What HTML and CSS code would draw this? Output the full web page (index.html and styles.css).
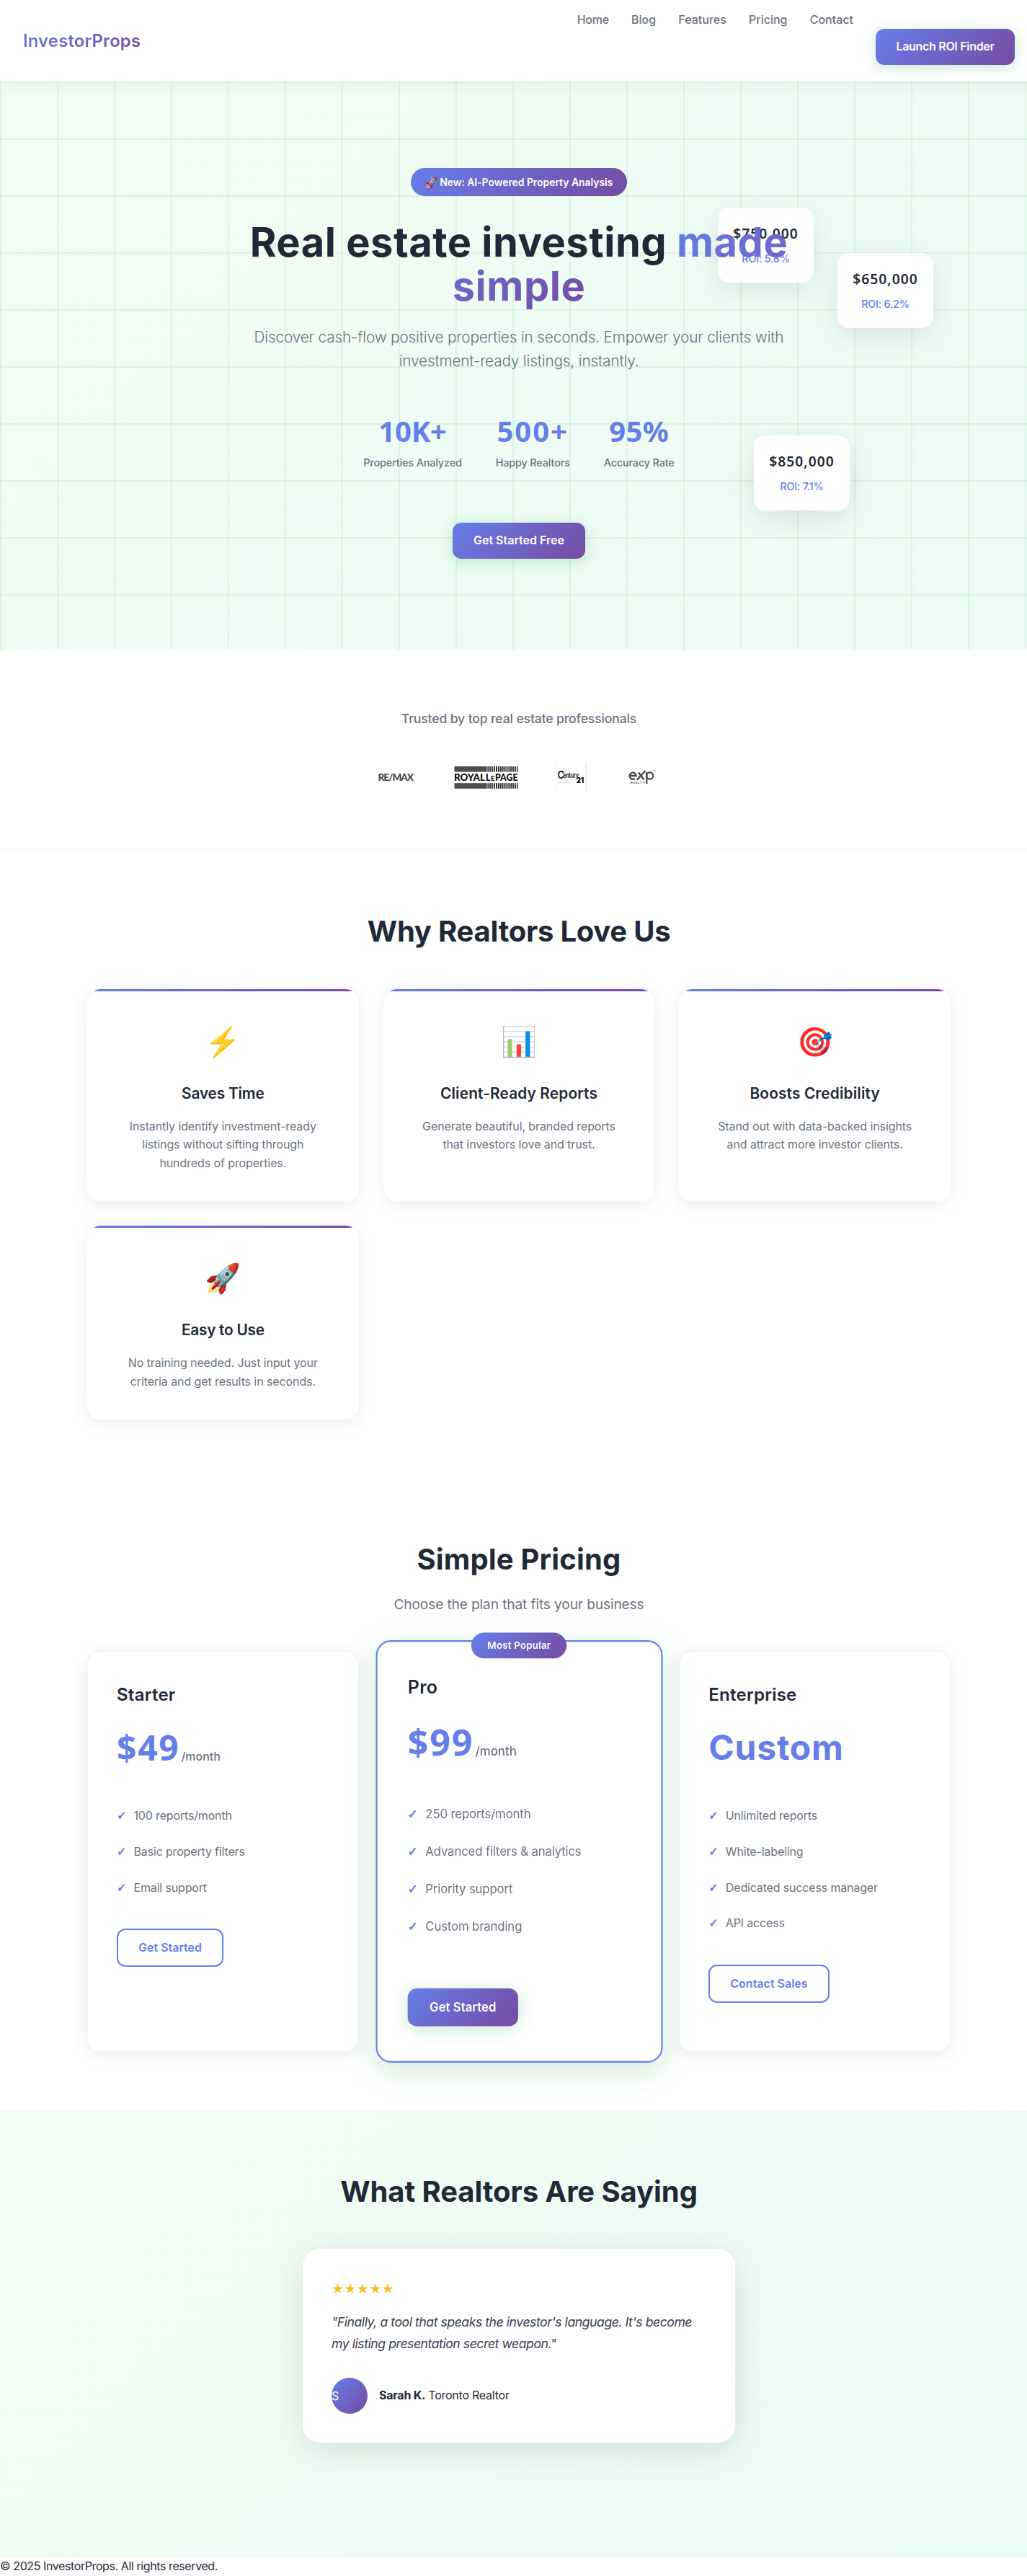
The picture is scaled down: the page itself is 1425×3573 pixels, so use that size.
FILE: index.html
```html
<!DOCTYPE html>
<html lang="en">
<head>
<meta charset="utf-8">
<title>InvestorProps</title>
<link rel="stylesheet" href="styles.css">
</head>
<body>
<div class="page">
  <nav class="nav">
    <div class="logo">InvestorProps</div>
    <div class="nav-links">
      <a class="l-home">Home</a><a>Blog</a><a>Features</a><a>Pricing</a><a>Contact</a>
    </div>
    <a class="btn btn-primary nav-cta">Launch ROI Finder</a>
  </nav>

  <header class="hero">
    <div class="float-card fc-1"><div class="price">$750,000</div><div class="roi">ROI: 5.8%</div></div>
    <div class="float-card fc-2"><div class="price">$650,000</div><div class="roi">ROI: 6.2%</div></div>
    <div class="float-card fc-3"><div class="price">$850,000</div><div class="roi">ROI: 7.1%</div></div>
    <div class="hero-content">
      <div class="badge">🚀 New: AI-Powered Property Analysis</div>
      <h1>Real estate investing <span class="grad">made<br>simple</span></h1>
      <p>Discover cash-flow positive properties in seconds. Empower your clients with<br>investment-ready listings, instantly.</p>
      <div class="stats">
        <div><div class="num n1">10K+</div><div class="lbl">Properties Analyzed</div></div>
        <div><div class="num n2">500+</div><div class="lbl">Happy Realtors</div></div>
        <div><div class="num n3">95%</div><div class="lbl">Accuracy Rate</div></div>
      </div>
      <a class="btn btn-primary hero-cta">Get Started Free</a>
    </div>
  </header>

  <section class="trusted">
    <p>Trusted by top real estate professionals</p>
    <div class="logos">
      <svg width="51" height="40" viewBox="0 0 51 40"><text x="0.5" y="25" font-family="Lato" font-weight="900" font-size="13.6" textLength="49.5" fill="#444">RE/MAX</text></svg>
      <svg width="89" height="40" viewBox="0 0 89 40">
        <defs><pattern id="bars" width="2.9" height="8" patternUnits="userSpaceOnUse"><rect width="1.8" height="8" fill="#222"/></pattern></defs>
        <g fill="#4d4d4d"><rect x="0.5" y="5" width="43.5" height="7.6"/><rect x="0.5" y="28.2" width="43.5" height="7.6"/></g>
        <g fill="url(#bars)"><rect x="44" y="5" width="44.5" height="7.6"/><rect x="44" y="28.2" width="44.5" height="7.6"/></g>
        <text y="25" font-family="Lato" font-weight="900" font-size="12.4" fill="#0a0a0a"><tspan x="0" textLength="43" lengthAdjust="spacingAndGlyphs">ROYAL</tspan><tspan x="44" textLength="7">L</tspan><tspan x="51" font-size="9.5">E</tspan><tspan x="57" textLength="31.5" lengthAdjust="spacingAndGlyphs">PAGE</tspan></text>
      </svg>
      <svg class="c21" width="44" height="40" viewBox="0 0 44 40">
        <path d="M.5 0v40" stroke="#f1f1f1"/><path d="M42.5 0v40" stroke="#f1f1f1" stroke-width="3"/>
        <path d="M3 27.8h18" stroke="#ddd"/><path d="M13 25q9-3 17 1" stroke="#e4e4e4" fill="none"/>
        <text x="2.4" y="22" font-family="Inter" font-weight="600" font-size="14" fill="#111" textLength="9.5" lengthAdjust="spacingAndGlyphs">C</text>
        <text x="10.5" y="21" font-family="Inter" font-weight="700" font-size="9.5" fill="#222" textLength="21.5" lengthAdjust="spacingAndGlyphs">entury</text>
        <text x="29" y="28" font-family="Inter" font-weight="900" font-size="10.5" fill="#0a0a0a" textLength="10" lengthAdjust="spacingAndGlyphs">21</text>
      </svg>
      <svg width="38" height="40" viewBox="0 0 38 40">
        <g fill="none" stroke="#484848" stroke-width="2.3">
          <path d="M2.2 18h8.3a4.4 4.7 0 1 0-1.4 3.7"/>
          <path d="M12 23.6L23.5 11"/><path d="M14 13.5l7.5 10"/>
          <circle cx="29.7" cy="18" r="4.6"/><path d="M25.3 13v16"/>
        </g>
        <text x="3" y="29.3" font-family="Inter" font-weight="700" font-size="4" fill="#555" textLength="19.5">REALTY</text>
        <text x="34.5" y="12" font-family="Inter" font-size="2.5" fill="#666">TM</text>
      </svg>
    </div>
  </section>

  <section class="features">
    <h2 class="h-why">Why Realtors Love Us</h2>
    <div class="grid">
      <div class="feature"><div class="emoji">⚡</div><h3 class="t-save">Saves Time</h3><p>Instantly identify investment-ready<br>listings without sifting through<br>hundreds of properties.</p></div>
      <div class="feature"><div class="emoji">📊</div><h3>Client-Ready Reports</h3><p>Generate beautiful, branded reports<br>that investors love and trust.</p></div>
      <div class="feature"><div class="emoji">🎯</div><h3>Boosts Credibility</h3><p>Stand out with data-backed insights<br>and attract more investor clients.</p></div>
      <div class="feature"><div class="emoji">🚀</div><h3 class="t-easy">Easy to Use</h3><p>No training needed. Just input your<br>criteria and get results in seconds.</p></div>
    </div>
  </section>

  <section class="pricing">
    <h2 class="h-price">Simple Pricing</h2>
    <p class="sub">Choose the plan that fits your business</p>
    <div class="grid">
      <div class="plan">
        <h3>Starter</h3>
        <div class="amount"><span class="digits">$49</span><span class="per">/month</span></div>
        <ul><li>100 reports/month</li><li>Basic property filters</li><li>Email support</li></ul>
        <a class="btn btn-outline">Get Started</a>
      </div>
      <div class="plan popular">
        <div class="tag">Most Popular</div>
        <h3>Pro</h3>
        <div class="amount"><span class="digits">$99</span><span class="per">/month</span></div>
        <ul><li>250 reports/month</li><li>Advanced filters &amp; analytics</li><li>Priority support</li><li>Custom branding</li></ul>
        <a class="btn btn-primary">Get Started</a>
      </div>
      <div class="plan">
        <h3>Enterprise</h3>
        <div class="amount">Custom</div>
        <ul><li>Unlimited reports</li><li>White-labeling</li><li>Dedicated success manager</li><li>API access</li></ul>
        <a class="btn btn-outline">Contact Sales</a>
      </div>
    </div>
  </section>

  <section class="testimonials">
    <h2 class="h-say">What Realtors Are Saying</h2>
    <div class="quote-card">
      <div class="stars">★★★★★</div>
      <p class="quote">"Finally, a tool that speaks the investor's language. It's become<br>my listing presentation secret weapon."</p>
      <div class="author"><div class="avatar">S</div><div><strong>Sarah K.</strong> Toronto Realtor</div></div>
    </div>
  </section>

  <footer>© 2025 InvestorProps. All rights reserved.</footer>
</div>
</body>
</html>
```
FILE: styles.css
```css
* { box-sizing: border-box; margin: 0; padding: 0; }
html, body { overflow-x: hidden; }
body {
  font-family: Inter, "Liberation Sans", sans-serif;
  font-size: 16px;
  line-height: 1.6;
  color: #1f2937;
  background: #fff;
}
.page { width: 1440px; }

h2 {
  font-size: 40px;
  font-weight: 700;
  text-align: center;
  line-height: 65px;
  height: 64px;
}
.h-why { letter-spacing: -0.006em; }
.h-say { letter-spacing: -0.002em; }
.h-price { letter-spacing: 0.004em; }

/* Buttons */
.btn {
  display: inline-block;
  font-weight: 600;
  border-radius: 12px;
  white-space: nowrap;
  text-align: center;
}
.btn-primary {
  color: #fff;
  height: 50px;
  line-height: 49px;
  background: linear-gradient(135deg, #667eea 0%, #764ba2 100%);
  box-shadow: 0 4px 20px rgba(34, 160, 84, 0.25);
}
.btn-outline {
  color: #667eea;
  border: 2px solid #667eea;
  height: 53px;
  line-height: 49px;
  padding: 0 28px;
}

/* Navigation */
.nav {
  position: relative;
  z-index: 2;
  display: flex;
  align-items: flex-start;
  height: 113px;
  padding: 0 32px;
  background: #fff;
  box-shadow: 0 4px 20px rgba(0, 0, 0, 0.06);
}
.logo {
  align-self: center;
  font-size: 24px;
  font-weight: 600;
  line-height: 40px;
  letter-spacing: 0.004em;
  background: linear-gradient(135deg, #667eea, #764ba2);
  -webkit-background-clip: text;
  background-clip: text;
  color: transparent;
}
.nav-links {
  display: flex;
  gap: 31.2px;
  margin-left: auto;
  margin-right: 31px;
  padding-top: 15px;
  font-weight: 500;
  color: #6b7280;
}
.l-home { letter-spacing: -0.016em; }
.nav-cta { width: 193px; margin-top: 40px; letter-spacing: -0.0195em; }

/* Hero */
.hero {
  position: relative;
  height: 789px;
  padding-top: 120px;
  background:
    linear-gradient(90deg, rgba(34, 180, 94, 0.1) 1.6px, transparent 1.6px) 0 0 / 79px 79px,
    linear-gradient(rgba(34, 180, 94, 0.1) 2px, transparent 2px) 0 0 / 79px 79px,
    linear-gradient(135deg, #f0fdf4 0%, #ebfcf5 100%);
}
.hero-content {
  position: relative;
  z-index: 1;
  text-align: center;
}
.badge {
  width: 300px;
  height: 39px;
  margin: 0 auto;
  line-height: 39px;
  border-radius: 20px;
  font-size: 14px;
  font-weight: 600;
  letter-spacing: -0.005em;
  color: #fff;
  background: linear-gradient(135deg, #667eea, #764ba2);
}
.hero h1 {
  margin-top: 33.6px;
  font-size: 56px;
  font-weight: 700;
  line-height: 61.6px;
  letter-spacing: 0.009em;
}
.grad {
  background: linear-gradient(135deg, #667eea, #764ba2);
  -webkit-background-clip: text;
  background-clip: text;
  color: transparent;
}
.hero p {
  margin-top: 22px;
  font-size: 20.8px;
  font-weight: 300;
  line-height: 33.7px;
  letter-spacing: -0.009em;
  color: #6b7280;
}
.stats {
  display: flex;
  justify-content: center;
  gap: 47px;
  margin-top: 48px;
}
.num {
  font-family: "Noto Sans", Inter, sans-serif;
  font-size: 40px;
  font-weight: 700;
  line-height: 64px;
  color: #667eea;
}
.n1 { letter-spacing: -0.005em; }
.n2 { letter-spacing: 0.05em; }
.n3 { letter-spacing: 0.01em; }
.lbl {
  font-size: 14.4px;
  font-weight: 500;
  line-height: 23px;
  letter-spacing: -0.01em;
  color: #6b7280;
}
.hero-cta { display: block; width: 184px; margin: 72px auto 0; }

/* Property cards floating over the hero */
.float-card {
  position: absolute;
  width: 133px;
  height: 104px;
  padding-top: 20px;
  border-radius: 16px;
  text-align: center;
  background: #fff;
  box-shadow: 0 10px 40px rgba(0, 0, 0, 0.1);
}
.fc-1 { left: 996px; top: 175px; }
.fc-2 { left: 1162px; top: 238px; }
.fc-3 { left: 1046px; top: 491px; }
.price {
  font-family: "Noto Sans", Inter, sans-serif;
  font-size: 19.2px;
  font-weight: 600;
  line-height: 31px;
  letter-spacing: 0.055em;
}
.roi {
  margin-top: 8px;
  font-size: 14.4px;
  font-weight: 500;
  line-height: 23px;
  letter-spacing: -0.015em;
  color: #667eea;
}

/* Trusted by */
.trusted {
  padding: 80px 0;
  border-bottom: 1px solid #f3f4f6;
  text-align: center;
}
.trusted p {
  font-size: 17.6px;
  font-weight: 500;
  line-height: 29px;
  height: 28px;
  letter-spacing: -0.0085em;
  color: #6b7280;
}
.logos {
  display: flex;
  justify-content: center;
  gap: 55px;
  height: 40px;
  margin-top: 48px;
  padding-right: 6px;
}
.c21 { margin-right: 2px; margin-left: -3px; }

/* Features */
.features { padding: 80px 120px; }
.grid {
  display: grid;
  grid-template-columns: repeat(3, 1fr);
  gap: 32px;
}
.features .grid { margin-top: 48px; }
.feature {
  position: relative;
  overflow: hidden;
  padding: 40px 32px;
  border: 1px solid #f6f6f8;
  border-radius: 20px;
  text-align: center;
  background: #fff;
  box-shadow: 0 4px 25px rgba(0, 0, 0, 0.08);
}
.feature::before {
  content: "";
  position: absolute;
  left: 0;
  right: 0;
  top: 0;
  height: 3px;
  background: linear-gradient(90deg, #667eea, #764ba2);
}
.emoji { height: 77px; font-size: 40px; line-height: 66px; }
.feature h3 {
  margin-top: 10.6px;
  font-size: 20.8px;
  font-weight: 600;
  line-height: 33px;
  letter-spacing: 0.008em;
}
.feature .t-save { letter-spacing: -0.008em; }
.feature .t-easy { letter-spacing: -0.012em; }
.feature p {
  margin-top: 17px;
  line-height: 25.6px;
  letter-spacing: -0.006em;
  color: #6b7280;
}

/* Pricing */
.pricing { padding: 80px 120px; }
.sub {
  margin-top: 15.6px;
  font-size: 19.2px;
  line-height: 31px;
  letter-spacing: -0.008em;
  text-align: center;
  color: #6b7280;
}
.pricing .grid { margin-top: 48.4px; }
.plan {
  position: relative;
  height: 558px;
  padding: 40px;
  border: 2px solid #f3f4f6;
  border-radius: 20px;
  background: #fff;
  box-shadow: 0 4px 25px rgba(0, 0, 0, 0.08);
}
.plan.popular {
  z-index: 1;
  border-color: #667eea;
  transform: scale(1.05);
  box-shadow: 0 10px 40px rgba(34, 160, 84, 0.22);
}
.tag {
  position: absolute;
  top: -12px;
  left: 50%;
  width: 126px;
  height: 34px;
  margin-left: -63px;
  border-radius: 20px;
  font-size: 12.8px;
  font-weight: 600;
  line-height: 33px;
  letter-spacing: 0.012em;
  text-align: center;
  color: #fff;
  background: linear-gradient(135deg, #667eea, #764ba2);
}
.plan h3 {
  height: 38.4px;
  font-size: 24px;
  font-weight: 600;
  line-height: 40px;
  letter-spacing: 0.01em;
}
.amount {
  height: 76.8px;
  margin-top: 16px;
  font-size: 48px;
  font-weight: 700;
  line-height: 76.8px;
  letter-spacing: 0.016em;
  color: #667eea;
}
.digits {
  margin-right: 2px;
  font-family: "Noto Sans", Inter, sans-serif;
  letter-spacing: 0.035em;
}
.per {
  font-size: 16px;
  font-weight: 500;
  line-height: 1;
  letter-spacing: 0;
  color: #6b7280;
}
.plan ul { list-style: none; margin: 32px 0; }
.plan li {
  display: flex;
  padding: 12px 0;
  line-height: 25.6px;
  letter-spacing: -0.01em;
  color: #6b7280;
}
.plan li::before {
  content: "✓";
  width: 23.5px;
  font-family: "DejaVu Sans", sans-serif;
  font-weight: 700;
  color: #667eea;
  -webkit-text-stroke: 0.7px #667eea;
}
.popular .btn { margin-top: 24px; width: 146px; }

/* Testimonials */
.testimonials {
  height: 620px;
  padding-top: 80px;
  background: linear-gradient(135deg, #f0fdf4 0%, #ebfcf5 100%);
}
.quote-card {
  width: 600px;
  height: 269px;
  margin: 48px auto 0;
  padding: 40px;
  border-radius: 24px;
  background: #fff;
  box-shadow: 0 10px 50px rgba(0, 0, 0, 0.12);
}
.stars {
  height: 31px;
  font-family: "DejaVu Sans", sans-serif;
  font-size: 19.2px;
  line-height: 31px;
  letter-spacing: 0.2px;
  color: #fbbf24;
}
.quote {
  margin-top: 16px;
  font-size: 17.6px;
  font-style: italic;
  line-height: 29.9px;
  letter-spacing: -0.025em;
  color: #374151;
}
.author {
  display: flex;
  align-items: center;
  gap: 16px;
  margin-top: 32px;
  letter-spacing: -0.015em;
}
.avatar {
  width: 50px;
  height: 50px;
  border-radius: 50%;
  line-height: 50px;
  color: #fff;
  background: linear-gradient(135deg, #667eea, #764ba2);
}

footer { height: 26px; letter-spacing: -0.0255em; }
```
